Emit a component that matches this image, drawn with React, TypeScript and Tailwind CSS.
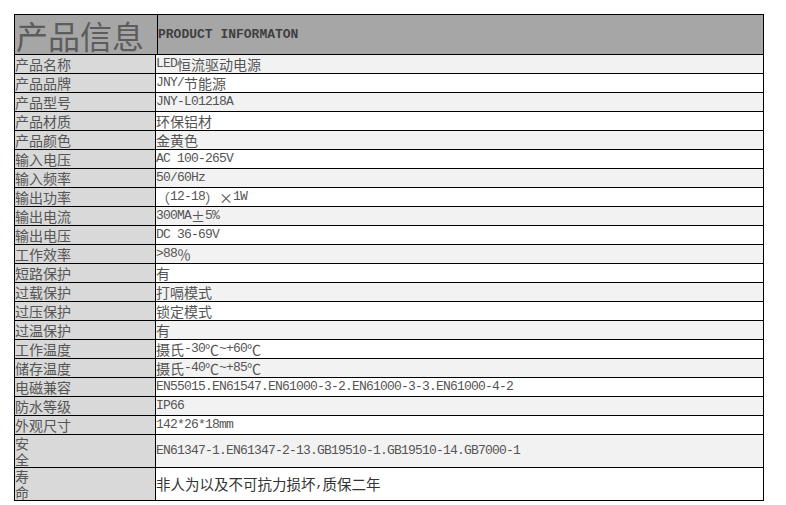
import React from 'react';

// spec rows: label, value, tall (two-line label)
const rows: { label: React.ReactNode; value: string; tall?: boolean; big?: boolean }[] = [
  { label: '产品名称', value: 'LED恒流驱动电源' },
  { label: '产品品牌', value: 'JNY/节能源' },
  { label: '产品型号', value: 'JNY-L01218A' },
  { label: '产品材质', value: '环保铝材' },
  { label: '产品颜色', value: '金黄色' },
  { label: '输入电压', value: 'AC 100-265V' },
  { label: '输入频率', value: '50/60Hz' },
  { label: '输出功率', value: '（12-18）×1W' },
  { label: '输出电流', value: '300MA±5%' },
  { label: '输出电压', value: 'DC 36-69V' },
  { label: '工作效率', value: '>88％' },
  { label: '短路保护', value: '有' },
  { label: '过载保护', value: '打嗝模式' },
  { label: '过压保护', value: '锁定模式' },
  { label: '过温保护', value: '有' },
  { label: '工作温度', value: '摄氏-30℃~+60℃' },
  { label: '储存温度', value: '摄氏-40℃~+85℃' },
  { label: '电磁兼容', value: 'EN55015.EN61547.EN61000-3-2.EN61000-3-3.EN61000-4-2' },
  { label: '防水等级', value: 'IP66' },
  { label: '外观尺寸', value: '142*26*18mm' },
  { label: <>安<br />全</>, value: 'EN61347-1.EN61347-2-13.GB19510-1.GB19510-14.GB7000-1', tall: true },
  { label: <>寿<br />命</>, value: '非人为以及不可抗力损坏,质保二年', tall: true, big: true },
];

// ASCII runs get the half-width mono face, the rest stays CJK
const Mixed: React.FC<{ text: string }> = ({ text }) => {
  const parts = text.split(/([\x20-\x7e]+)/).filter((p) => p.length > 0);
  return (
    <>
      {parts.map((p, i) =>
        /^[\x20-\x7e]+$/.test(p) ? (
          <span key={i} className="font-['Liberation_Mono',monospace] text-[13px] tracking-[-0.8px] whitespace-pre">
            {p}
          </span>
        ) : (
          <span key={i}>{p}</span>
        )
      )}
    </>
  );
};

export default function App() {
  return (
    <div className="w-[786px] h-[505px] bg-white pt-[14px] pl-[14px] font-['Noto_Sans_CJK_SC',sans-serif] text-[#555555]">
      <div className="w-[750px] border-l border-r border-t border-black">
        {/* Header */}
        <div className="flex h-[40px] border-b border-black bg-[#a6a6a6]">
          <div className="w-[143px] border-r border-black flex items-center pl-[1px] text-[32px] leading-none text-[#5c5c5c]">
            产品信息
          </div>
          <div className="flex-1 flex items-center font-['Liberation_Mono',monospace] font-bold text-[13px] text-[#3f3f3f] whitespace-pre">
            PRODUCT INFORMATON
          </div>
        </div>

        {rows.map((r, i) => (
          <div
            key={i}
            className={`flex border-b border-black ${r.tall ? 'h-[33px]' : 'h-[19px]'}`}
          >
            <div
              className={`w-[141px] border-r border-black bg-[#d9d9d9] text-[14px] ${
                r.tall ? 'leading-[16px]' : 'leading-[18px]'
              }`}
            >
              {r.label}
            </div>
            <div
              className={`flex-1 flex items-center whitespace-nowrap ${
                i % 2 === 0 ? 'bg-[#f2f2f2]' : 'bg-white'
              } ${r.big ? 'text-[14.5px] text-[#333333]' : 'text-[14px]'} leading-[18px]`}
            >
              <Mixed text={r.value} />
            </div>
          </div>
        ))}
      </div>
    </div>
  );
}
